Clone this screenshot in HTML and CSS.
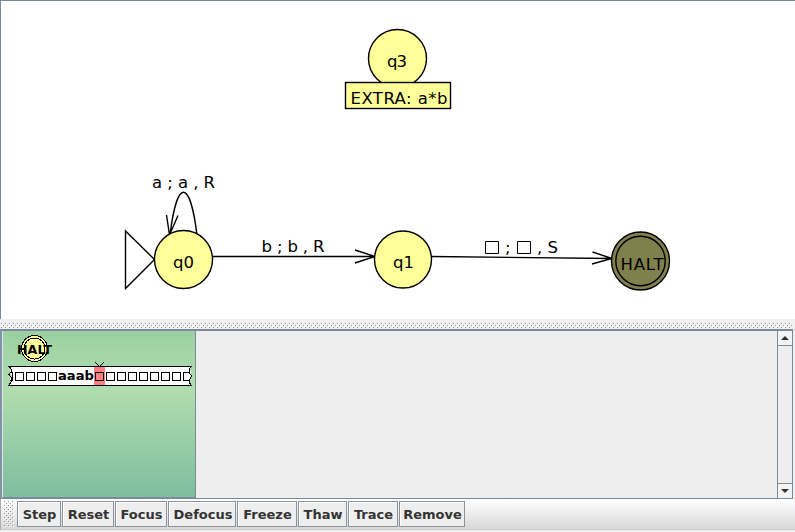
FILE: index.html
```
<!DOCTYPE html>
<html lang="en">
<head>
<meta charset="utf-8">
<title>Turing machine simulator</title>
<link rel="stylesheet" href="styles.css">
</head>
<body>
<main class="app">
  <section class="canvas">
    <svg class="diagram" width="794" height="318" viewBox="1 1 794 318">
      <g class="line">
        <path d="M125.5 231V288.500L154.500 259.500Z" fill="#fff"/>
        <path d="M197 235C190 178 177 178 170 235M166.500 215L169.500 235L178 215.500"/>
        <path d="M212 256.500H375M355 250L375 256.500L355 263"/>
        <path d="M431 256.500L612 258.500M592.500 252L612 258.500L592 264"/>
        <circle class="state" cx="397.500" cy="58.500" r="29"/>
        <rect class="state" x="345.500" y="82.500" width="105" height="26"/>
        <circle class="state" cx="183.500" cy="259.500" r="29"/>
        <circle class="state" cx="403" cy="259.500" r="28.500"/>
        <circle class="halt" cx="640.500" cy="261" r="29"/>
        <circle class="halt" cx="640.500" cy="261" r="24.700"/>
      </g>
      <g class="label">
        <text x="387" y="67" textLength="20">q3</text>
        <text x="350.500" y="104" textLength="97">EXTRA: a*b</text>
        <text x="173" y="268" textLength="21">q0</text>
        <text x="393" y="268" textLength="21">q1</text>
        <text x="620.500" y="270" textLength="43">HALT</text>
        <text x="152" y="188" textLength="63">a ; a , R</text>
        <text x="261.500" y="252" textLength="63">b ; b , R</text>
        <text x="505" y="253">;</text>
        <text x="537" y="253" textLength="21">, S</text>
      </g>
      <path class="blank" d="M485.500 241.500h13v12h-13zM517.500 241.500h13v12h-13z"/>
    </svg>
  </section>
  <div class="divider">
    <svg width="791" height="5"><defs><pattern id="dots" width="4" height="4" patternUnits="userSpaceOnUse"><path d="M0 0h1v1h-1zM2 2h1v1h-1z" fill="#8c979f"/><path d="M1 1h1v1h-1zM3 3h1v1h-1z" fill="#fff"/></pattern></defs><rect width="791" height="5" fill="url(#dots)"/></svg>
  </div>
  <section class="configs">
    <div class="config">
      <svg width="192" height="165" viewBox="3 331 192 165">
        <g shape-rendering="crispEdges">
          <circle cx="34.500" cy="348.500" r="13" fill="#ffff99" stroke="#000"/>
          <circle cx="34.500" cy="348.500" r="10.500" fill="none" stroke="#000"/>
          <path d="M9 366.500H192L189.500 369L191.500 372L189.500 374L191.500 376L189.500 379L190 382L191.500 385.500H9L11 382L9.500 379L12 376L9.500 372L11 369Z" fill="#fff"/>
          <path d="M8 366.500H192M8 385.500H192M9 366L11 369V372L9 374.500L11 377V382L9 385M191 366L189.500 369V373L191.500 376L189.500 380V383L191 385" fill="none" stroke="#000"/>
          <path d="M94 367h11v18H94z" fill="#ff8080"/>
          <path d="M95 362L99.500 366.500L104 362" fill="none" stroke="#000"/>
          <path class="cells" d="M15.500 372.500h8v8h-8zM26.500 372.500h8v8h-8zM37.500 372.500h8v8h-8zM48.500 372.500h8v8h-8zM95.500 372.500h8v8h-8zM106.500 372.500h8v8h-8zM117.500 372.500h8v8h-8zM128.500 372.500h8v8h-8zM139.500 372.500h8v8h-8zM150.500 372.500h8v8h-8zM161.500 372.500h8v8h-8zM172.500 372.500h8v8h-8zM190 372.500h-6.500v8h6.500M10 372.500h2.500v8h-2.500"/>
        </g>
        <g class="small">
          <text x="17" y="354" textLength="35" lengthAdjust="spacingAndGlyphs">HALT</text>
          <text x="58" y="380" textLength="36" lengthAdjust="spacingAndGlyphs">aaab</text>
        </g>
      </svg>
    </div>
    <div class="scrollbar">
      <div class="arrow up"><svg width="8" height="4"><path d="M0 4L4 0L8 4Z"/></svg></div>
      <div class="arrow down"><svg width="8" height="4"><path d="M0 0L4 4L8 0Z"/></svg></div>
    </div>
  </section>
  <nav class="toolbar">
    <svg class="grip" width="10" height="26"><rect width="10" height="26" fill="url(#dots)"/></svg>
    <button class="b-step">Step</button>
    <button class="b-reset">Reset</button>
    <button class="b-focus">Focus</button>
    <button class="b-defocus">Defocus</button>
    <button class="b-freeze">Freeze</button>
    <button class="b-thaw">Thaw</button>
    <button class="b-trace">Trace</button>
    <button class="b-remove">Remove</button>
  </nav>
</main>
</body>
</html>
```
FILE: styles.css
```
* { box-sizing: border-box; }
body { margin: 0; background: #eee; font-family: "DejaVu Sans", sans-serif; overflow: hidden; }
svg { display: block; }
.app { width: 795px; height: 532px; display: flex; flex-direction: column; }
.canvas { height: 319px; background: #fff; border-top: 1px solid #7a8a99; border-left: 1px solid #7a8a99; }
.line { fill: none; stroke: #000; stroke-width: 1.4; }
.line .state { fill: #ffff99; }
.line .halt { fill: #80804d; }
.label { font-size: 16.5px; fill: #000; white-space: pre; }
.blank { fill: none; stroke: #000; stroke-width: 1; }
.divider { height: 10px; padding: 4px 0 0 1px; background: #f1f1f1; }
.configs { height: 170px; display: flex; justify-content: space-between; width: 793px; border: 1px solid #7a8a99; border-top-width: 2px; border-left: 2px solid #8492a6; }
.config { width: 194px; border: 1px solid #7a8a99; border-top: 0; border-left-color: #dfe8ee; background: linear-gradient(#9bd0a3, #b0ddaf 35%, #7fbd9e); }
.scrollbar { width: 15px; border-left: 1px solid #7a8a99; background: #eee; display: flex; flex-direction: column; justify-content: space-between; }
.arrow { height: 15px; display: flex; align-items: center; justify-content: center; fill: #333; background: #f4f4f4; }
.up { border-bottom: 1px solid #7a8a99; }
.down { border-top: 1px solid #7a8a99; }
.cells { fill: none; stroke: #000; }
.small { font-size: 12.5px; font-weight: bold; }
.toolbar { height: 31px; padding: 2px 0 2px 3px; display: flex; gap: 1px; background: linear-gradient(#fff, #d8d8d8); border-bottom: 1px solid #ccc; border-left: 1px solid #aaa; }
.grip { margin-right: 2px; }
button { height: 26px; padding: 0 0 0 1px; border: 1px solid #8c9299; background: #eee; box-shadow: inset 1px 1px #fff; color: #333; font: bold 13px "DejaVu Sans", sans-serif; }
.b-step { width: 44px; }
.b-reset { width: 52px; }
.b-focus { width: 52px; }
.b-defocus { width: 68px; padding-left: 2px; }
.b-freeze { width: 60px; }
.b-thaw { width: 49px; }
.b-trace { width: 50px; }
.b-remove { width: 66px; }
```
